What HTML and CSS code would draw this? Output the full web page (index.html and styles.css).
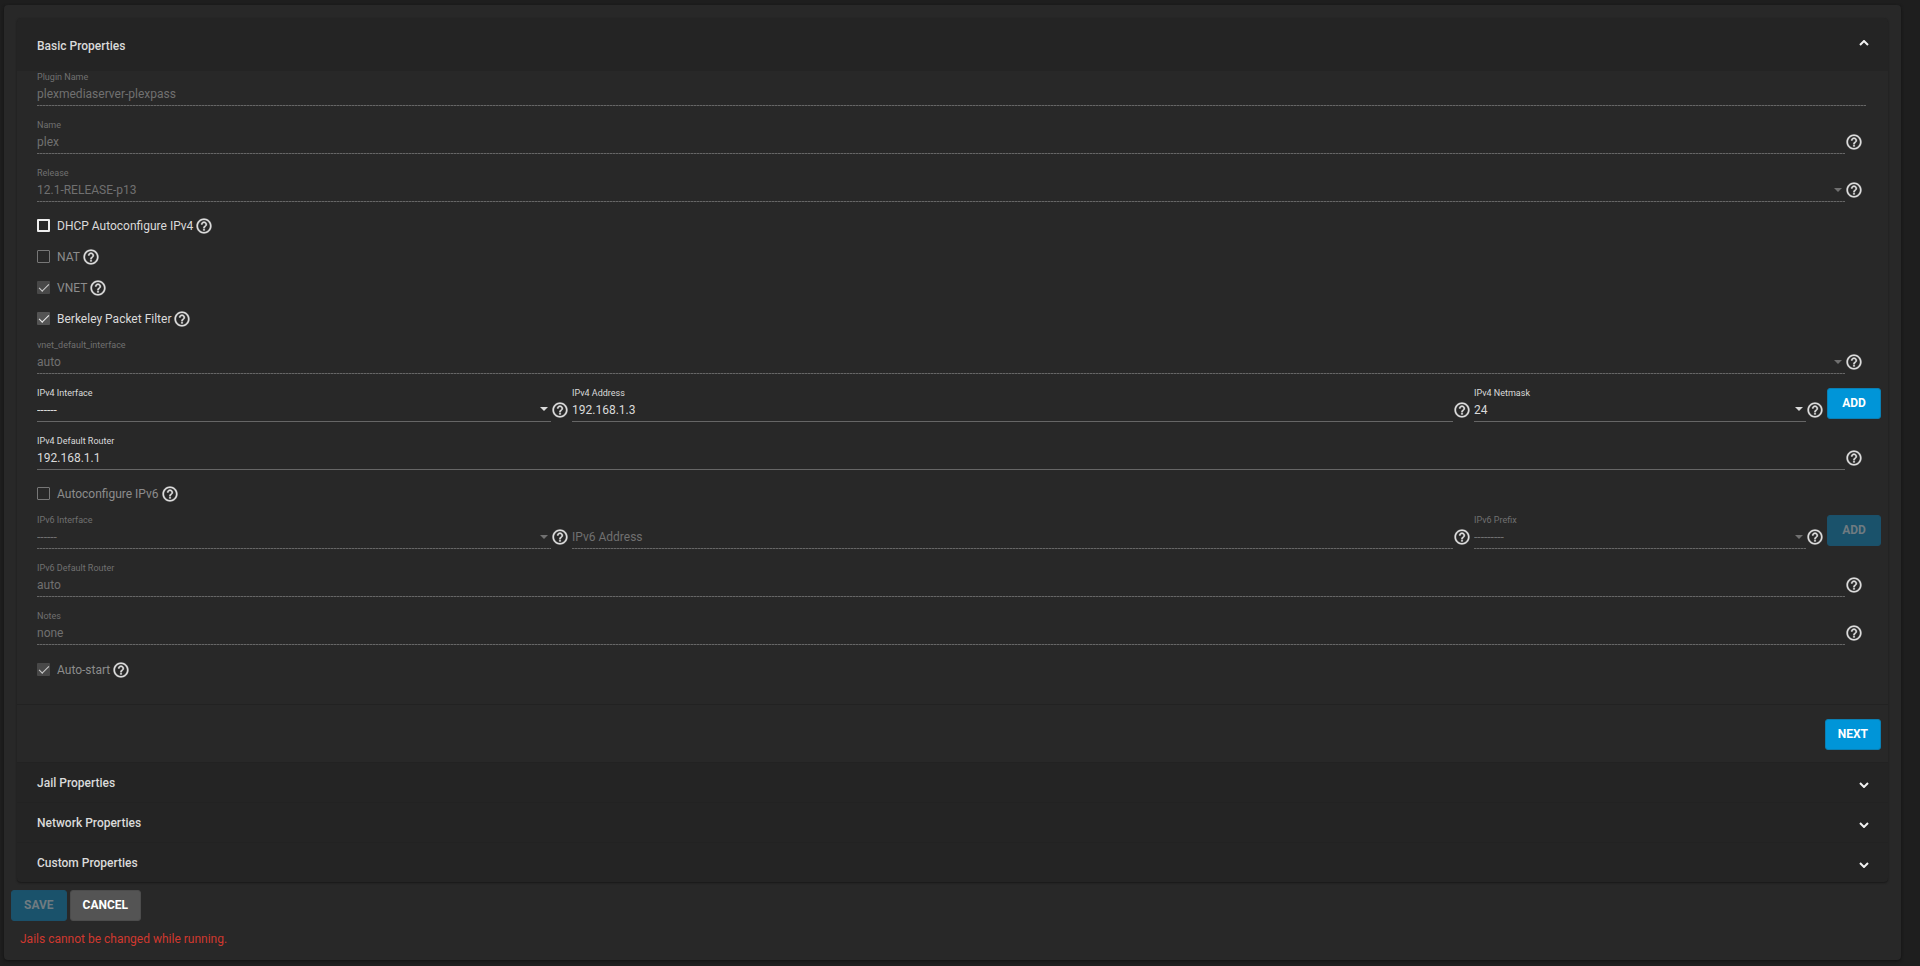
FILE: index.html
```html
<!DOCTYPE html>
<html lang="en">
<head>
<meta charset="utf-8">
<title>Edit Plugin</title>
<link rel="stylesheet" href="styles.css">
</head>
<body>
<svg class="sprite" aria-hidden="true">
  <symbol id="help" viewBox="0 0 24 24"><path d="M11 18h2v-2h-2v2zm1-16C6.48 2 2 6.48 2 12s4.480 10 10 10 10-4.480 10-10S17.520 2 12 2zm0 18c-4.410 0-8-3.590-8-8s3.590-8 8-8 8 3.590 8 8-3.590 8-8 8zm0-14c-2.210 0-4 1.790-4 4h2c0-1.100.9-2 2-2s2 .9 2 2c0 2-3 1.750-3 5h2c0-2.250 3-2.500 3-5 0-2.210-1.790-4-4-4z"/></symbol>
  <symbol id="down" viewBox="0 0 10 6"><path d="M1 1l4 4 4-4"/></symbol>
  <symbol id="up" viewBox="0 0 10 6"><path d="M1 5l4-4 4 4"/></symbol>
</svg>
<main class="card">
  <form>
    <div class="accordion">
      <section>
        <button type="button" class="panel-header open" aria-expanded="true">Basic Properties<svg class="chevron"><use href="#up"/></svg></button>
        <div class="content">
          <div class="row">
            <div class="field disabled"><label for="plugin">Plugin Name</label><input id="plugin" value="plexmediaserver-plexpass" disabled></div>
          </div>
          <div class="row">
            <div class="field disabled"><label for="name">Name</label><input id="name" value="plex" disabled></div>
            <svg class="help"><use href="#help"/></svg>
          </div>
          <div class="row">
            <div class="field select disabled"><label for="release">Release</label><select id="release" disabled><option>12.1-RELEASE-p13</option></select></div>
            <svg class="help"><use href="#help"/></svg>
          </div>
          <div class="checks">
            <div class="check"><label><input type="checkbox">DHCP Autoconfigure IPv4</label><svg class="help"><use href="#help"/></svg></div>
            <div class="check"><label><input type="checkbox" disabled>NAT</label><svg class="help"><use href="#help"/></svg></div>
            <div class="check"><label><input type="checkbox" checked disabled>VNET</label><svg class="help"><use href="#help"/></svg></div>
            <div class="check"><label><input type="checkbox" checked>Berkeley Packet Filter</label><svg class="help"><use href="#help"/></svg></div>
          </div>
          <div class="row">
            <div class="field select disabled"><label for="vnet">vnet_default_interface</label><select id="vnet" disabled><option>auto</option></select></div>
            <svg class="help"><use href="#help"/></svg>
          </div>
          <div class="row address">
            <div class="cell">
              <div class="field select"><label for="if4">IPv4 Interface</label><select id="if4"><option>------</option></select></div>
              <svg class="help"><use href="#help"/></svg>
            </div>
            <div class="cell">
              <div class="field"><label for="ip4">IPv4 Address</label><input id="ip4" value="192.168.1.3"></div>
              <svg class="help"><use href="#help"/></svg>
            </div>
            <div class="cell">
              <div class="field select"><label for="mask4">IPv4 Netmask</label><select id="mask4"><option>24</option></select></div>
              <svg class="help"><use href="#help"/></svg>
            </div>
            <button type="button" class="btn primary">ADD</button>
          </div>
          <div class="row">
            <div class="field"><label for="router4">IPv4 Default Router</label><input id="router4" value="192.168.1.1"></div>
            <svg class="help"><use href="#help"/></svg>
          </div>
          <div class="checks">
            <div class="check"><label><input type="checkbox" disabled>Autoconfigure IPv6</label><svg class="help"><use href="#help"/></svg></div>
          </div>
          <div class="row address">
            <div class="cell">
              <div class="field select disabled"><label for="if6">IPv6 Interface</label><select id="if6" disabled><option>------</option></select></div>
              <svg class="help"><use href="#help"/></svg>
            </div>
            <div class="cell">
              <div class="field disabled"><input aria-label="IPv6 Address" placeholder="IPv6 Address" disabled></div>
              <svg class="help"><use href="#help"/></svg>
            </div>
            <div class="cell">
              <div class="field select disabled"><label for="prefix6">IPv6 Prefix</label><select id="prefix6" disabled><option>---------</option></select></div>
              <svg class="help"><use href="#help"/></svg>
            </div>
            <button type="button" class="btn primary" disabled>ADD</button>
          </div>
          <div class="row">
            <div class="field disabled"><label for="router6">IPv6 Default Router</label><input id="router6" value="auto" disabled></div>
            <svg class="help"><use href="#help"/></svg>
          </div>
          <div class="row">
            <div class="field disabled"><label for="notes">Notes</label><input id="notes" value="none" disabled></div>
            <svg class="help"><use href="#help"/></svg>
          </div>
          <div class="checks">
            <div class="check"><label><input type="checkbox" checked disabled>Auto-start</label><svg class="help"><use href="#help"/></svg></div>
          </div>
        </div>
        <div class="panel-actions"><button type="button" class="btn primary">NEXT</button></div>
      </section>
      <button type="button" class="panel-header" aria-expanded="false">Jail Properties<svg class="chevron"><use href="#down"/></svg></button>
      <button type="button" class="panel-header" aria-expanded="false">Network Properties<svg class="chevron"><use href="#down"/></svg></button>
      <button type="button" class="panel-header" aria-expanded="false">Custom Properties<svg class="chevron"><use href="#down"/></svg></button>
    </div>
    <div class="form-actions">
      <button type="submit" class="btn primary" disabled>SAVE</button>
      <button type="button" class="btn">CANCEL</button>
    </div>
    <p class="error">Jails cannot be changed while running.</p>
  </form>
</main>
</body>
</html>
```
FILE: styles.css
```css
* { box-sizing: border-box; }

body {
  margin: 0;
  padding: 5px 19px 5px 4px;
  background: #1e1e1e;
  color: #dadada;
  font: 12px/18px Roboto, sans-serif;
}

button, input, select { font: inherit; color: inherit; }

.sprite { display: none; }

.card {
  padding: 13px 13px 12px;
  border-radius: 4px;
  background: #282828;
  box-shadow: 0 1px 3px #111;
}

.accordion {
  border-radius: 4px;
  background: #242424;
  box-shadow: 0 1px 2px #181818;
}

.panel-header {
  display: flex;
  align-items: center;
  justify-content: space-between;
  width: 100%;
  height: 40px;
  padding: 0 19px 0 20px;
  border: 0;
  border-top: 1px solid #222;
  background: none;
  font-weight: 500;
  text-align: left;
}

.panel-header.open { height: 53px; padding-top: 2px; border-top: 0; }

.chevron {
  width: 10px;
  height: 6px;
  margin-top: 5px;
  fill: none;
  stroke: #f2f2f2;
  stroke-width: 2;
}

.open .chevron { margin-top: 0; margin-bottom: 5px; }

.content {
  padding: 0 7px 19px 20px;
  background: #282828;
}

.row {
  display: flex;
  margin: 13px 15px 0 0;
}

.row:first-child { margin-top: 0; }
.checks + .row { margin-top: 5px; }

.row.address {
  display: grid;
  grid-template-columns: 535fr 902fr 353fr 54px;
  margin-right: 0;
}

.cell { display: flex; padding-right: 3px; }

.field {
  position: relative;
  display: flex;
  flex: 1;
  flex-direction: column;
  justify-content: flex-end;
  height: 35px;
  padding-bottom: 2px;
  border-bottom: 1px solid #666;
}

.field label {
  font-size: 9px;
  line-height: 12px;
  margin-bottom: 2px;
}

.field input, .field select {
  width: 100%;
  height: 18px;
  padding: 0;
  border: 0;
  border-radius: 0;
  outline: 0;
  background: none;
  appearance: none;
  opacity: 1;
}

.field.disabled {
  padding-bottom: 3px;
  border-bottom: 0;
  color: #707070;
  background: repeating-linear-gradient(to right, #666 0 2px, #484848 2px 3px) bottom / 100% 1px no-repeat;
}

.field input::placeholder { color: #707070; }

.select::after {
  content: "";
  position: absolute;
  right: 3px;
  bottom: 10px;
  border: 4px solid transparent;
  border-top-color: currentColor;
  border-bottom: 0;
}

.help {
  flex: none;
  align-self: flex-end;
  width: 18px;
  height: 18px;
  margin-bottom: 3px;
  fill: #dcdcdc;
  stroke: #dcdcdc;
  stroke-width: 0.4;
}

.row > .help { margin-right: 3px; }

.checks { padding-top: 8px; }
.checks:last-child { padding-top: 9px; }

.check {
  display: flex;
  align-items: center;
  gap: 2px;
  height: 31px;
}

.check label {
  display: flex;
  align-items: center;
  gap: 7px;
}

.check label:has(:disabled) { color: #8c8c8c; }
.check .help { align-self: center; margin: 0; }

.check input {
  display: grid;
  place-items: center;
  width: 13px;
  height: 13px;
  margin: 0;
  border: 1px solid #777;
  border-radius: 1px;
  appearance: none;
}

.check input:enabled { border: 2px solid #eee; }
.check input:checked { border: 0; background: #484848; }
.check input:checked:enabled { background: #545454; }

.check input:checked::before {
  content: "";
  width: 9px;
  height: 4px;
  margin-bottom: 3px;
  border: solid #ccc;
  border-width: 0 0 1px 1px;
  transform: rotate(-45deg);
}

.check input:checked:enabled::before { border-color: #eee; }

.btn {
  height: 31px;
  padding: 0 12px 2px;
  border: 1px solid #4c4c4c;
  border-radius: 3px;
  background: #545454;
  color: #fff;
  font-weight: 700;
}

.btn.primary {
  border-color: #0a7fb3;
  background: #0095d8;
}

.btn.primary:disabled {
  border-color: #1b506a;
  background: #1a526b;
  color: #6f7b81;
}

.panel-actions {
  display: flex;
  justify-content: flex-end;
  padding: 14px 7px 12px;
  border-top: 1px solid #222;
  background: #282828;
}

.address .btn { margin-top: 1px; padding: 0 0 2px; }

.form-actions {
  display: flex;
  gap: 3px;
  margin: 8px -6px 0;
}

.error {
  margin: 9px 3px 0;
  color: #d0382f;
}
```
